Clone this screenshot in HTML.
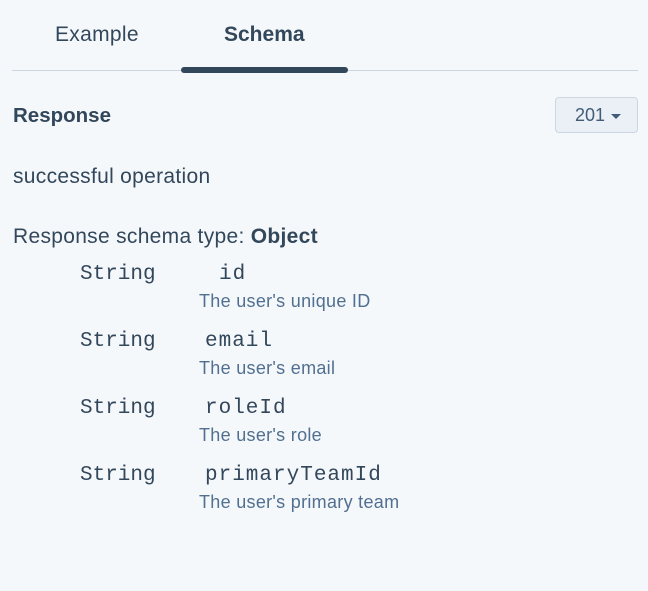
<!DOCTYPE html>
<html><head><style>
body{margin:0;width:648px;height:591px;background:#f5f8fb;color:#33475b;font-family:"Liberation Sans",sans-serif;position:relative;overflow:hidden}
.a{position:absolute;white-space:nowrap}
.m{font-family:"Liberation Mono",monospace;font-size:21px;color:#33475b}
.n{letter-spacing:1px}
.d{font-size:18px;letter-spacing:.3px;color:#516f90}
</style></head><body>
<div class="a" style="left:55px;top:23px;font-size:21px;letter-spacing:.3px">Example</div>
<div class="a" style="left:224px;top:23px;font-size:21px;font-weight:bold">Schema</div>
<div class="a" style="left:12px;top:70px;width:626px;height:1px;background:#cbd6e2"></div>
<div class="a" style="left:181px;top:67px;width:167px;height:6px;border-radius:3px;background:#33475b"></div>
<div class="a" style="left:13px;top:104px;font-size:20.5px;font-weight:bold">Response</div>
<div class="a" style="left:555px;top:97px;width:83px;height:36px;border:1px solid #cbd6e2;border-radius:4px;background:#eaf0f6;box-sizing:border-box;font-size:18px;color:#425b76;line-height:34px;padding-left:19px">201 <span style="display:inline-block;width:0;height:0;border-left:5px solid transparent;border-right:5px solid transparent;border-top:5px solid #425b76;vertical-align:middle;margin-left:1px"></span></div>
<div class="a" style="left:13px;top:165px;font-size:21px;letter-spacing:.3px">successful operation</div>
<div class="a" style="left:13px;top:225px;font-size:21px;letter-spacing:.3px">Response schema type: <b>Object</b></div>
<div class="a m" style="left:80px;top:263px">String</div><div class="a m n" style="left:219px;top:263px">id</div><div class="a d" style="left:199px;top:291px">The user's unique ID</div>
<div class="a m" style="left:80px;top:330px">String</div><div class="a m n" style="left:205px;top:330px">email</div><div class="a d" style="left:199px;top:358px">The user's email</div>
<div class="a m" style="left:80px;top:397px">String</div><div class="a m n" style="left:205px;top:397px">roleId</div><div class="a d" style="left:199px;top:425px">The user's role</div>
<div class="a m" style="left:80px;top:464px">String</div><div class="a m n" style="left:205px;top:464px">primaryTeamId</div><div class="a d" style="left:199px;top:492px">The user's primary team</div>
</body></html>
